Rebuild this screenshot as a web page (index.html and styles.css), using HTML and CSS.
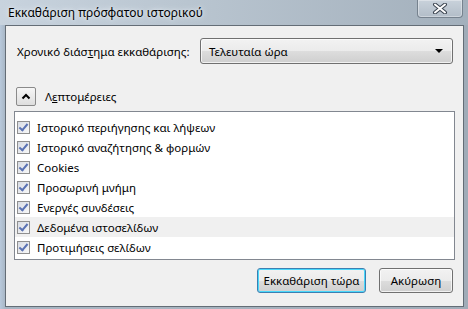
FILE: index.html
```html
<!DOCTYPE html>
<html>
<head>
    <title>Εκκαθάριση πρόσφατου ιστορικού</title>
    <link rel="stylesheet" href="styles.css">
</head>
<body>
    <div class="window">
        <!-- Title bar -->
        <div class="titlebar">
            <span class="title">Εκκαθάριση πρόσφατου ιστορικού</span>
            <div class="close">
                <svg width="16" height="11" viewBox="0 0 16 11">
                    <path d="M3 1.5 L13 9.5 M13 1.5 L3 9.5" stroke="#3b4450" stroke-width="4" stroke-linecap="round"/>
                    <path d="M3 1.5 L13 9.5 M13 1.5 L3 9.5" stroke="#ffffff" stroke-width="2" stroke-linecap="round"/>
                </svg>
            </div>
        </div>

        <div class="client">
            <!-- Time range -->
            <div class="range-row">
                <label class="range-label">Χρονικό διάσ<u>τ</u>ημα εκκαθάρισης:</label>
                <div class="select">
                    <span>Τελευταία ώρα</span>
                    <span class="arrow"></span>
                </div>
            </div>

            <!-- Details toggle -->
            <div class="details-row">
                <div class="toggle">
                    <svg width="10" height="7" viewBox="0 0 10 7">
                        <path d="M1.5 5.5 L5 2 L8.5 5.5" stroke="#000" stroke-width="2" fill="none"/>
                    </svg>
                </div>
                <span>Λ<u>ε</u>πτομέρειες</span>
            </div>

            <!-- Items list -->
            <div class="list">
                <div class="item"><span class="check"></span>Ιστορικό περιήγησης και λήψεων</div>
                <div class="item"><span class="check"></span>Ιστορικό αναζήτησης &amp; φορμών</div>
                <div class="item"><span class="check"></span>Cookies</div>
                <div class="item"><span class="check"></span>Προσωρινή μνήμη</div>
                <div class="item"><span class="check"></span>Ενεργές συνδέσεις</div>
                <div class="item hover"><span class="check"></span>Δεδομένα ιστοσελίδων</div>
                <div class="item"><span class="check"></span>Προτιμήσεις σελίδων</div>
            </div>

            <!-- Buttons -->
            <div class="buttons">
                <button class="btn default">Εκκαθάριση τώρα</button>
                <button class="btn">Ακύρωση</button>
            </div>
        </div>
    </div>
</body>
</html>
```

FILE: styles.css
```css
body {
    margin: 0;
    font-family: 'Noto Sans', 'Open Sans', sans-serif;
    font-size: 11.5px;
    color: #000;
}

.window {
    width: 468px;
    height: 309px;
    box-sizing: border-box;
    padding: 0 4px 2px 5px;
    background: linear-gradient(90deg, #b8c9dc 0px, #a6b4c2 6px, #aab6c2 30%, #a3afbb 70%, #a0acb8 100%);
    display: flex;
    flex-direction: column;
}

.titlebar {
    height: 25px;
    display: flex;
    justify-content: space-between;
    align-items: flex-start;
    background: linear-gradient(90deg, #c8d3de 0%, #b9c5d0 40%, #a3b0bc 100%);
    margin: 0 -4px 0 -5px;
    padding: 0 5px 0 8px;
}

.title {
    line-height: 26px;
    font-size: 12px;
    text-shadow: 0 0 6px #e6ecf2, 0 0 3px #e6ecf2;
}

.close {
    width: 44px;
    height: 17px;
    border: 1px solid #76828e;
    border-top: none;
    border-radius: 0 0 4px 4px;
    background: linear-gradient(#c9d2db, #b2bdc8);
    box-shadow: inset 0 0 0 1px rgba(255,255,255,0.35);
    display: flex;
    align-items: center;
    justify-content: center;
}

.client {
    flex: 1;
    background: #f0f0f0;
    border: 1px solid #646d76;
    display: flex;
    flex-direction: column;
}

.range-row {
    display: flex;
    align-items: center;
    margin: 12px 10px 0 11px;
    height: 26px;
}

.range-label {
    width: 183px;
    white-space: nowrap;
}

.select {
    flex: 1;
    height: 24px;
    border: 1px solid #707070;
    border-radius: 3px;
    background: linear-gradient(#f2f2f2 0%, #ebebeb 50%, #dddddd 51%, #cfcfcf 100%);
    box-shadow: inset 0 0 0 1px rgba(255,255,255,0.7);
    display: flex;
    align-items: center;
    justify-content: space-between;
    padding: 0 9px 0 8px;
}

.arrow {
    width: 0;
    height: 0;
    border-left: 4px solid transparent;
    border-right: 4px solid transparent;
    border-top: 4px solid #000;
}

.details-row {
    display: flex;
    align-items: center;
    gap: 9px;
    margin: 23px 0 0 10px;
    height: 19px;
}

.toggle {
    width: 18px;
    height: 17px;
    border: 1px solid #8a8a8a;
    border-radius: 2px;
    background: linear-gradient(#f6f6f6, #dedede);
    display: flex;
    align-items: center;
    justify-content: center;
}

.list {
    margin: 5px 8px 0 8px;
    height: 149px;
    border: 1px solid #828790;
    background: #fff;
    padding-top: 5px;
    box-sizing: border-box;
}

.item {
    height: 20px;
    display: flex;
    align-items: center;
    padding-left: 2px;
}

.item.hover {
    background: #f0f0f0;
}

.check {
    width: 11px;
    height: 11px;
    border: 1px solid #8f8f8f;
    margin-right: 7px;
    background: linear-gradient(135deg, #d8dce4, #f8f8f8);
    position: relative;
}

.check::after {
    content: '';
    position: absolute;
    left: 3px;
    top: 0px;
    width: 3px;
    height: 7px;
    border: solid #5a72b4;
    border-width: 0 2px 2px 0;
    transform: rotate(40deg);
}

.buttons {
    display: flex;
    justify-content: flex-end;
    gap: 13px;
    margin: 8px 10px 0 0;
}

.btn {
    font-family: inherit;
    font-size: 11.5px;
    height: 25px;
    white-space: nowrap;
    border: 1px solid #707070;
    border-radius: 3px;
    background: linear-gradient(#f2f2f2 0%, #ebebeb 50%, #dddddd 51%, #cfcfcf 100%);
    box-shadow: inset 0 0 0 1px rgba(255,255,255,0.7);
    padding: 0;
    width: 74px;
}

.btn.default {
    border-color: #3c7fb1;
    box-shadow: inset 0 0 0 1px #48d8fb;
    width: 109px;
}
```
